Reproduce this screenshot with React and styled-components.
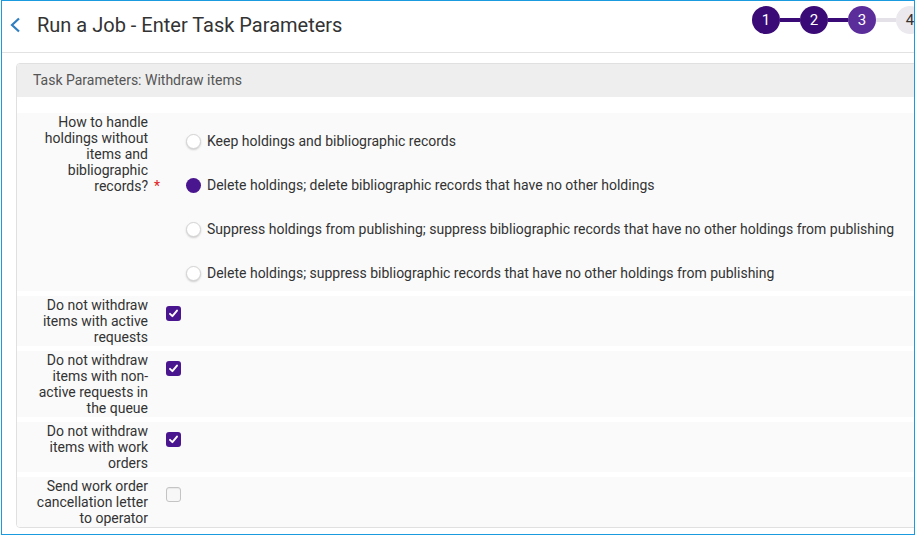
import styled, { createGlobalStyle } from "styled-components";

const GlobalStyle = createGlobalStyle`
  html, body {
    margin: 0;
    padding: 0;
    background: #ffffff;
  }
  body {
    font-family: Roboto, "Liberation Sans", Arial, sans-serif;
    color: #333333;
  }
`;

const Frame = styled.div`
  margin-left: 1px;
  width: 912px;
  height: 533px;
  border: 1px solid #1a9be0;
  overflow: hidden;
  background: #ffffff;
`;

const Header = styled.div`
  height: 51px;
  border-bottom: 1px solid #e2e2e2;
  display: flex;
  align-items: flex-start;
  position: relative;
`;

const Back = styled.div`
  width: 35px;
  height: 48px;
  display: flex;
  align-items: center;
  justify-content: flex-start;
  padding-left: 7px;
  box-sizing: border-box;
`;

const Title = styled.h1`
  margin: 0;
  font-size: 20px;
  font-weight: 400;
  line-height: 48px;
  color: #333333;
  flex: 1;
`;

const Stepper = styled.div`
  display: flex;
  align-items: center;
  margin-top: 5px;
  margin-right: -10px;
`;

const Step = styled.div`
  width: 28px;
  height: 28px;
  border-radius: 50%;
  display: flex;
  align-items: center;
  justify-content: center;
  font-size: 15px;
  background: ${(p) => p.bg};
  color: ${(p) => (p.dark ? "#333333" : "#ffffff")};
`;

const Link = styled.div`
  width: 20px;
  height: 4px;
  background: ${(p) => p.bg};
`;

const Card = styled.div`
  margin: 10px 0 0 14px;
  width: 920px;
  border: 1px solid #e0e0e0;
  border-radius: 4px;
  overflow: hidden;
`;

const CardHeader = styled.div`
  height: 33px;
  background: #eeeeee;
  padding-left: 16px;
  font-size: 14px;
  line-height: 33px;
  color: #555555;
`;

const Form = styled.div`
  padding-top: 16px;
  display: flex;
  flex-direction: column;
  gap: 5px;
`;

const Row = styled.div`
  display: grid;
  grid-template-columns: 131px 18px 1fr;
  background: #fafafa;
  padding: 1px 0;
`;

const Label = styled.div`
  padding-left: 15px;
  text-align: right;
  font-size: 14px;
  line-height: 16px;
  color: #333333;
`;

const Required = styled.div`
  display: flex;
  align-items: flex-end;
  justify-content: center;
  padding-bottom: ${(p) => p.bottom}px;
  color: #e02020;
  font-size: 14px;
  line-height: 16px;
`;

const Options = styled.div`
  display: flex;
  flex-direction: column;
  gap: 28px;
  padding: 19px 0 9px 20px;
`;

const Option = styled.label`
  display: flex;
  align-items: center;
  gap: 6px;
  font-size: 14px;
  line-height: 16px;
  color: #333333;
  white-space: nowrap;
`;

const Radio = styled.span`
  width: 15px;
  height: 15px;
  border-radius: 50%;
  box-sizing: border-box;
  flex-shrink: 0;
  background: ${(p) => (p.checked ? "#4a168f" : "#ffffff")};
  border: ${(p) => (p.checked ? "none" : "1px solid #d4d4d4")};
  box-shadow: ${(p) => (p.checked ? "none" : "0 1px 2px rgba(0,0,0,0.18)")};
`;

const CheckCell = styled.div`
  padding-top: 9px;
`;

const Box = styled.span`
  display: flex;
  align-items: center;
  justify-content: center;
  width: 15px;
  height: 15px;
  box-sizing: border-box;
  border-radius: 3px;
  background: ${(p) => (p.checked ? "#4a168f" : "#f7f7f7")};
  border: ${(p) => (p.checked ? "none" : "1px solid #c4c4c4")};
  box-shadow: ${(p) => (p.checked ? "none" : "inset 0 1px 1px rgba(0,0,0,0.06)")};
`;

const options = [
  { text: "Keep holdings and bibliographic records", checked: false },
  { text: "Delete holdings; delete bibliographic records that have no other holdings", checked: true },
  {
    text: "Suppress holdings from publishing; suppress bibliographic records that have no other holdings from publishing",
    checked: false,
  },
  {
    text: "Delete holdings; suppress bibliographic records that have no other holdings from publishing",
    checked: false,
  },
];

const checks = [
  { label: ["Do not withdraw", "items with active", "requests"], checked: true },
  { label: ["Do not withdraw", "items with non-", "active requests in", "the queue"], checked: true },
  { label: ["Do not withdraw", "items with work", "orders"], checked: true },
  { label: ["Send work order", "cancellation letter", "to operator"], checked: false },
];

const Lines = ({ lines }) =>
  lines.map((l, i) => (
    <span key={i}>
      {l}
      <br />
    </span>
  ));

const Check = ({ checked }) => (
  <Box checked={checked}>
    {checked && (
      <svg width="11" height="11" viewBox="0 0 11 11">
        <polyline points="2,5.8 4.4,8.2 9,2.6" fill="none" stroke="#ffffff" strokeWidth="1.9" strokeLinecap="round" strokeLinejoin="round" />
      </svg>
    )}
  </Box>
);

const App = () => {
  return (
    <>
      <GlobalStyle />
      <Frame>
        <Header>
          <Back>
            <svg width="12" height="16" viewBox="0 0 12 16">
              <polyline points="10,1.5 3,8 10,14.5" fill="none" stroke="#2f7fc1" strokeWidth="2.2" />
            </svg>
          </Back>
          <Title>Run a Job - Enter Task Parameters</Title>
          <Stepper>
            <Step bg="#3a0a76">1</Step>
            <Link bg="#3a0a76" />
            <Step bg="#3a0a76">2</Step>
            <Link bg="#3a0a76" />
            <Step bg="#5b2d9b">3</Step>
            <Link bg="#e4e2e8" />
            <Step bg="#ebe9ee" dark>
              4
            </Step>
          </Stepper>
        </Header>
        <Card>
          <CardHeader>Task Parameters: Withdraw items</CardHeader>
          <Form>
            <Row>
              <Label>
                <Lines lines={["How to handle", "holdings without", "items and", "bibliographic", "records?"]} />
              </Label>
              <Required bottom={96}>*</Required>
              <Options>
                {options.map((o) => (
                  <Option key={o.text}>
                    <Radio checked={o.checked} />
                    {o.text}
                  </Option>
                ))}
              </Options>
            </Row>
            {checks.map((c) => (
              <Row key={c.label.join(" ")}>
                <Label>
                  <Lines lines={c.label} />
                </Label>
                <div />
                <CheckCell>
                  <Check checked={c.checked} />
                </CheckCell>
              </Row>
            ))}
          </Form>
        </Card>
      </Frame>
    </>
  );
};

export default App;
